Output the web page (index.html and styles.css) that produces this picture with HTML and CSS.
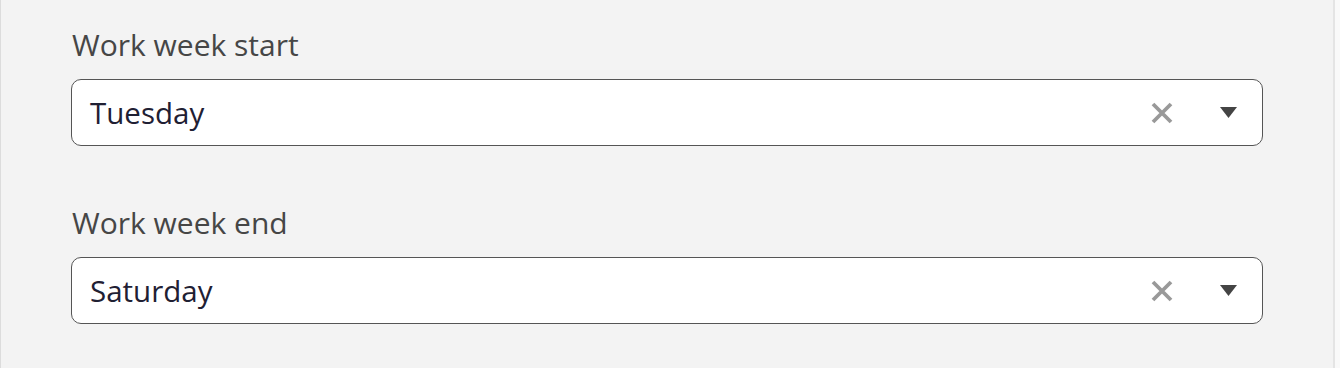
FILE: index.html
```html
<!DOCTYPE html>
<html>
<head>
<meta charset="utf-8">
<link rel="stylesheet" href="styles.css">
</head>
<body>
<div class="page">
  <div class="panel">
    <div class="field">
      <div class="label">Work week start</div>
      <div class="select">
        <span class="value">Tuesday</span>
        <span class="clear"><svg width="22" height="22" viewBox="0 0 22 22"><path d="M2 2L20 20M20 2L2 20" stroke="#999" stroke-width="3.8" fill="none"/></svg></span>
        <span class="arrow"><svg width="17" height="11" viewBox="0 0 17 11"><path d="M0 0H17L8.5 11Z" fill="#444"/></svg></span>
      </div>
    </div>
    <div class="field">
      <div class="label">Work week end</div>
      <div class="select">
        <span class="value">Saturday</span>
        <span class="clear"><svg width="22" height="22" viewBox="0 0 22 22"><path d="M2 2L20 20M20 2L2 20" stroke="#999" stroke-width="3.8" fill="none"/></svg></span>
        <span class="arrow"><svg width="17" height="11" viewBox="0 0 17 11"><path d="M0 0H17L8.5 11Z" fill="#444"/></svg></span>
      </div>
    </div>
  </div>
  <div class="scroll"></div>
</div>
</body>
</html>
```

FILE: styles.css
```css
html, body {
  margin: 0;
  padding: 0;
  background: #f3f3f3;
}
body {
  font-family: "Open Sans", "Noto Sans", sans-serif;
}
.page {
  display: flex;
  width: 1340px;
  height: 368px;
  overflow: hidden;
}
.panel {
  flex: 1;
  border-left: 1px solid #dcdcdc;
  padding: 24px 70px 0 70px;
  display: flex;
  flex-direction: column;
  gap: 56px;
}
.field {
  display: flex;
  flex-direction: column;
  gap: 13px;
}
.label {
  font-size: 30px;
  line-height: 42px;
  color: #464646;
  padding-left: 1px;
}
.select {
  box-sizing: border-box;
  height: 67px;
  border: 1px solid #555;
  border-radius: 10px;
  background: #fff;
  display: flex;
  align-items: center;
  padding: 0 25px 0 18px;
}
.value {
  flex: 1;
  font-size: 29.5px;
  color: #1f2033;
}
.clear {
  display: flex;
  margin-right: 47px;
}
.arrow {
  display: flex;
}
.scroll {
  width: 5px;
  border-left: 2px solid #e4e4e4;
  background: #f9f9f9;
}
```
